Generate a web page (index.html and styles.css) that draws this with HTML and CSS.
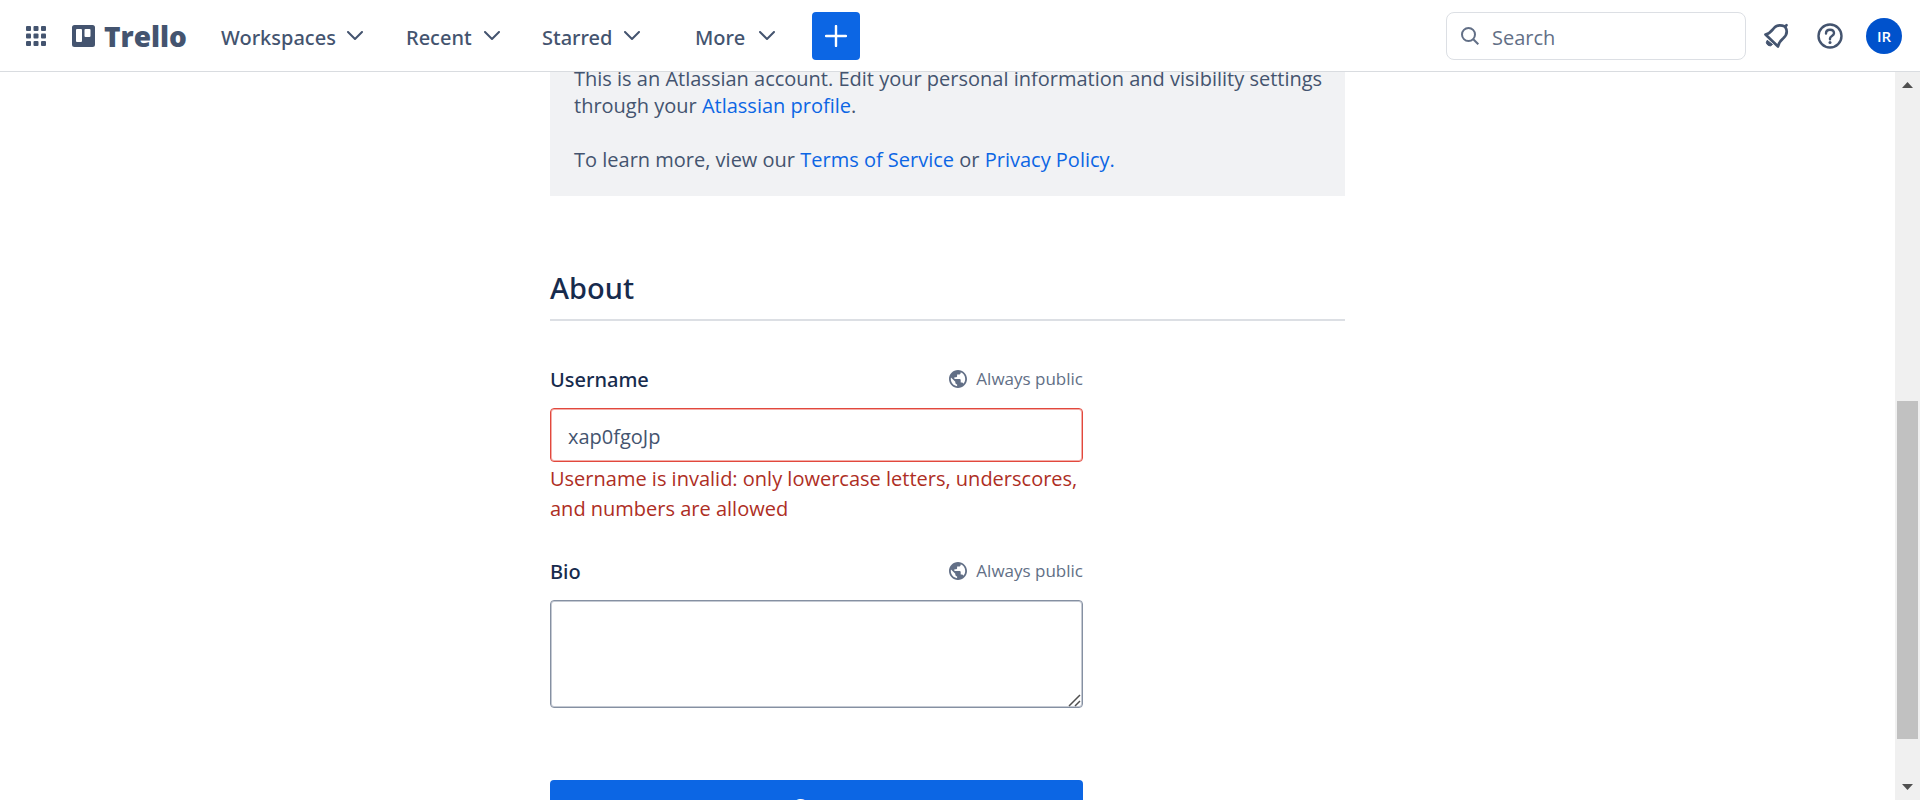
FILE: index.html
```html
<!DOCTYPE html>
<html lang="en">
<head>
<meta charset="utf-8">
<title>Profile and visibility | Trello</title>
<link rel="stylesheet" href="styles.css">
</head>
<body>
<svg class="sprite" aria-hidden="true">
  <symbol id="chevron" viewBox="0 0 16 10"><path d="M1 1l7 7 7-7" fill="none" stroke="currentColor" stroke-width="2" stroke-linecap="round" stroke-linejoin="round"/></symbol>
  <symbol id="globe" viewBox="2 2 20 20"><path fill="currentColor" d="M12 2C6.48 2 2 6.48 2 12s4.48 10 10 10 10-4.48 10-10S17.52 2 12 2zm-1 17.93c-3.95-.49-7-3.85-7-7.93 0-.62.08-1.21.21-1.79L9 15v1c0 1.1.9 2 2 2v1.930zm6.900-2.540c-.26-.81-1-1.390-1.900-1.390h-1v-3c0-.55-.45-1-1-1H8v-2h2c.55 0 1-.45 1-1V7h2c1.100 0 2-.9 2-2v-.41c2.930 1.190 5 4.060 5 7.410 0 2.080-.8 3.970-2.100 5.390z"/></symbol>
</svg>
<header class="topbar">
  <button class="icon-button apps" aria-label="Switch apps">
    <svg width="20" height="20" viewBox="0 0 20 20" fill="currentColor"><rect width="5" height="5" rx="1"/><rect x="7.500" width="5" height="5" rx="1"/><rect x="15" width="5" height="5" rx="1"/><rect y="7.500" width="5" height="5" rx="1"/><rect x="7.500" y="7.500" width="5" height="5" rx="1"/><rect x="15" y="7.500" width="5" height="5" rx="1"/><rect y="15" width="5" height="5" rx="1"/><rect x="7.500" y="15" width="5" height="5" rx="1"/><rect x="15" y="15" width="5" height="5" rx="1"/></svg>
  </button>
  <a class="logo" href="#">
    <svg width="23" height="22" viewBox="0 0 23 22"><path fill="currentColor" fill-rule="evenodd" d="M2.500 0h18A2.500 2.500 0 0 1 23 2.500v17a2.500 2.500 0 0 1-2.500 2.500h-18A2.500 2.500 0 0 1 0 19.500v-17A2.500 2.500 0 0 1 2.500 0zM5 4a1 1 0 0 0-1 1v11a1 1 0 0 0 1 1h4a1 1 0 0 0 1-1V5a1 1 0 0 0-1-1zm8.500 0a1 1 0 0 0-1 1v6a1 1 0 0 0 1 1h4a1 1 0 0 0 1-1V5a1 1 0 0 0-1-1z"/></svg>
    <span>Trello</span>
  </a>
  <nav class="menus">
    <button class="menu workspaces"><span>Workspaces</span><svg class="chevron"><use href="#chevron"/></svg></button>
    <button class="menu recent"><span>Recent</span><svg class="chevron"><use href="#chevron"/></svg></button>
    <button class="menu starred"><span>Starred</span><svg class="chevron"><use href="#chevron"/></svg></button>
    <button class="menu more"><span>More</span><svg class="chevron"><use href="#chevron"/></svg></button>
    <button class="create" aria-label="Create"><svg width="22" height="22" viewBox="0 0 22 22"><path d="M11 1v20M1 11h20" stroke="currentColor" stroke-width="2.400" stroke-linecap="round"/></svg></button>
  </nav>
  <label class="search">
    <svg width="18" height="18" viewBox="0 0 18 18" fill="none" stroke="currentColor" stroke-width="2"><circle cx="7.500" cy="7.500" r="6.500"/><path d="M12.300 12.300l5 5"/></svg>
    <input type="search" placeholder="Search" aria-label="Search">
  </label>
  <button class="icon-button bell" aria-label="Notifications">
    <svg width="26" height="26" viewBox="0 0 26 26"><path d="M2.500 11.500C7 10.500 8.500 8 11 5C14 1.500 18 1.800 22 3.500C24.500 7.500 24.300 11.500 20.500 15C17.500 17.500 16 19.500 15 23.500z" fill="none" stroke="currentColor" stroke-width="2.700" stroke-linejoin="round"/><path d="M22 3.500l1.500-1.300" stroke="currentColor" stroke-width="2.700" stroke-linecap="round"/><path fill="currentColor" d="M4.200 17.300l5.300 4.200A3 3 0 0 1 4.200 17.300z" stroke="currentColor"/></svg>
  </button>
  <button class="icon-button help" aria-label="Help">
    <svg width="26" height="26" viewBox="0 0 26 26" fill="none" stroke="currentColor" stroke-width="2.400"><circle cx="13" cy="13" r="11.500"/><path d="M9 10.500C9 8 10.700 6.700 13 6.700s4 1.400 4 3.600C17 13 13 13 13 15.500v.8" stroke-linecap="round"/><circle cx="13" cy="19.500" r="1.500" fill="currentColor" stroke="none"/></svg>
  </button>
  <button class="avatar" aria-label="Account">IR</button>
</header>
<div class="body">
  <main class="page">
    <div class="content">
      <section class="notice">
        <p>This is an Atlassian account. Edit your personal information and visibility settings through your <a href="#">Atlassian profile</a>.</p>
        <p>To learn more, view our <a href="#">Terms of Service</a> or <a href="#">Privacy Policy.</a></p>
      </section>
      <h2>About</h2>
      <form class="form">
        <div class="field-head"><label for="username">Username</label><span class="visibility"><svg><use href="#globe"/></svg>Always public</span></div>
        <input class="username" id="username" type="text" value="xap0fgoJp" aria-describedby="username-error">
        <p class="error" id="username-error">Username is invalid: only lowercase letters, underscores, and numbers are allowed</p>
        <div class="field-head"><label for="bio">Bio</label><span class="visibility"><svg><use href="#globe"/></svg>Always public</span></div>
        <textarea id="bio"></textarea>
        <button class="save" type="submit">Save</button>
      </form>
    </div>
  </main>
  <div class="scrollbar" aria-hidden="true">
    <svg width="11" height="6" viewBox="0 0 11 6"><path d="M0 6L5.500 0 11 6z" fill="currentColor"/></svg>
    <div class="track"><div class="thumb"></div></div>
    <svg width="11" height="6" viewBox="0 0 11 6"><path d="M0 0L5.500 6 11 0z" fill="currentColor"/></svg>
  </div>
</div>
</body>
</html>
```
FILE: styles.css
```css
* { box-sizing: border-box; }
body {
  display: flex;
  flex-direction: column;
  height: 100vh;
  margin: 0;
  overflow: hidden;
  background: #fff;
  color: #172b4d;
  font-family: "Segoe UI", "Open Sans", "Noto Sans", sans-serif;
  font-size: 20px;
}
button, input, textarea { font: inherit; }
button { padding: 0; border: 0; background: none; color: inherit; cursor: pointer; }
a { color: #0c66e4; text-decoration: none; }
h2, p { margin: 0; }
.sprite { position: absolute; width: 0; height: 0; }
.menus, h2, .field-head label, .save { font-family: "Segoe UI", "Noto Sans", sans-serif; font-weight: 500; }

.topbar {
  display: flex;
  flex: none;
  align-items: center;
  height: 72px;
  padding: 0 18px 0 26px;
  border-bottom: 1px solid #d9dce0;
  color: #44546f;
}
.icon-button { display: flex; }
.logo {
  display: flex;
  align-items: center;
  gap: 9px;
  width: 114px;
  margin-left: 26px;
  color: #44546f;
  font-family: "Open Sans", sans-serif;
  font-size: 28px;
  font-weight: 800;
  line-height: 36px;
}
.logo svg { flex: none; }
.menus { display: flex; align-items: center; margin-left: 35px; }
.menu { display: flex; align-items: center; justify-content: space-between; }
.menu span { padding-top: 3px; }
.workspaces { width: 142px; }
.recent { width: 94px; margin-left: 43px; }
.starred { width: 98px; margin-left: 42px; }
.more { width: 80px; margin-left: 55px; }
.chevron { flex: none; width: 16px; height: 10px; }
.create {
  display: flex;
  align-items: center;
  justify-content: center;
  width: 48px;
  height: 48px;
  margin-left: 37px;
  border-radius: 4px;
  background: #0c66e4;
  color: #fff;
}
.search {
  display: flex;
  align-items: center;
  gap: 13px;
  width: 300px;
  height: 48px;
  margin-left: auto;
  padding: 0 14px;
  border: 1px solid #dcdfe4;
  border-radius: 8px;
  color: #626f86;
}
.search input { min-width: 0; flex: 1; padding: 3px 0 0; border: 0; outline: 0; background: none; color: inherit; }
.search input::placeholder { color: #626f86; opacity: 1; }
.bell { margin-left: 17px; }
.help { margin-left: 28px; }
.avatar {
  width: 36px;
  height: 36px;
  margin-left: 23px;
  border-radius: 50%;
  background: #0052cc;
  color: #fff;
  font-size: 15px;
  font-weight: 600;
}

.body { display: flex; flex: 1; min-height: 0; }
.page { flex: 1; overflow: hidden; }
.content { width: 100%; max-width: 795px; margin: 0 auto; }
.notice {
  display: grid;
  gap: 27px;
  margin-top: -28px;
  padding: 21px 8px 23px 24px;
  background: #f1f2f4;
  color: #44546f;
  line-height: 27px;
}
h2 {
  margin-top: 70px;
  padding-bottom: 9px;
  border-bottom: 2px solid #dcdfe4;
  font-size: 29px;
  line-height: 44px;
}
.form { display: flex; flex-direction: column; max-width: 533px; margin-top: 43px; }
.field-head { display: flex; align-items: center; justify-content: space-between; height: 30px; margin-bottom: 14px; }
.visibility { display: flex; align-items: center; gap: 9px; color: #626f86; font-size: 17px; line-height: 24px; }
.visibility svg { width: 18px; height: 18px; }
.username, textarea { border: 1px solid; border-radius: 4px; background: #fff; }
.username {
  height: 54px;
  padding: 2px 17px 0;
  border-color: #e2483d;
  box-shadow: inset 0 0 0 1px #f3aea9;
  color: #44546f;
}
.error { margin-bottom: 32px; padding-top: 2px; color: #ae2e24; line-height: 30px; }
textarea { height: 108px; padding: 8px 16px; border-color: #8590a2; box-shadow: inset 0 0 0 1px #c5cad3; resize: both; }
textarea::-webkit-resizer {
  background: url("data:image/svg+xml,%3Csvg xmlns='http://www.w3.org/2000/svg' viewBox='0 0 15 15'%3E%3Cpath d='M2 14L13 3M8 14l5-5' stroke='%23505050' stroke-width='1.500'/%3E%3C/svg%3E") right bottom / 100% 100% no-repeat;
}
.save { height: 50px; margin-top: 72px; border-radius: 4px; background: #0c66e4; color: #fff; }

.scrollbar {
  display: flex;
  flex: none;
  flex-direction: column;
  align-items: center;
  width: 25px;
  padding: 10px 2px;
  background: #f0f0f0;
  color: #505050;
}
.track { flex: 1; width: 100%; padding: 313px 0 45px; }
.thumb { height: 100%; background: #c1c1c1; }
```
